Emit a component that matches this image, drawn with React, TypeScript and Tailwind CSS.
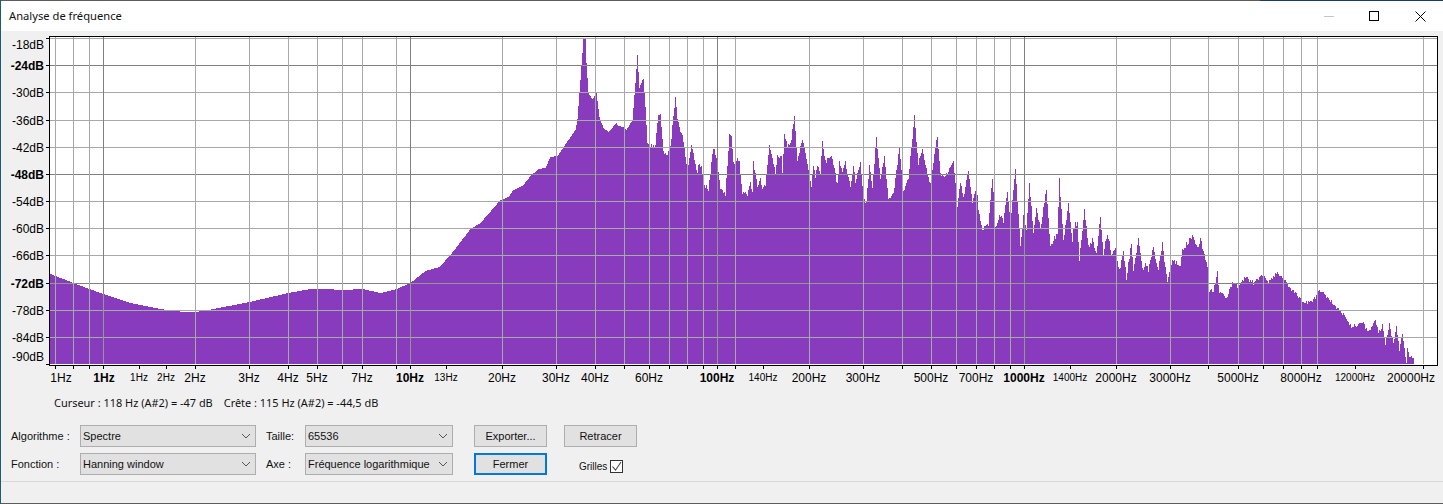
const GRID_X = [55, 73, 89, 195, 249, 288, 317, 342, 362, 396, 502, 556, 595, 624, 649, 669, 687, 703, 735, 809, 863, 902, 931, 956, 976, 994, 1010, 1116, 1170, 1208, 1238, 1263, 1283, 1301, 1317, 1423];
const GRID_X_MAJOR = [103, 410, 717, 1024];
const MINOR_TICKS = [139, 166, 446, 763, 1070, 1355];

const DB_LABELS: [string, number, number, boolean][] = [
  ["-18dB", 38, 45, false],
  ["-24dB", 65, 66, true],
  ["-30dB", 92, 93, false],
  ["-36dB", 120, 121, false],
  ["-42dB", 147, 148, false],
  ["-48dB", 174, 175, true],
  ["-54dB", 201, 202, false],
  ["-60dB", 228, 229, false],
  ["-66dB", 255, 256, false],
  ["-72dB", 283, 284, true],
  ["-78dB", 310, 311, false],
  ["-84dB", 337, 338, false],
  ["-90dB", 364, 357, false],
];

const HZ_LABELS: [string, number, "n" | "b" | "s"][] = [
  ["1Hz", 61, "n"], ["1Hz", 104, "b"], ["1Hz", 139, "s"], ["2Hz", 166, "s"], ["2Hz", 195, "n"],
  ["3Hz", 249, "n"], ["4Hz", 288, "n"], ["5Hz", 317, "n"], ["7Hz", 362, "n"], ["10Hz", 410, "b"],
  ["13Hz", 446, "s"], ["20Hz", 502, "n"], ["30Hz", 556, "n"], ["40Hz", 595, "n"], ["60Hz", 649, "n"],
  ["100Hz", 717, "b"], ["140Hz", 763, "s"], ["200Hz", 809, "n"], ["300Hz", 863, "n"], ["500Hz", 931, "n"],
  ["700Hz", 976, "n"], ["1000Hz", 1024, "b"], ["1400Hz", 1070, "s"], ["2000Hz", 1116, "n"], ["3000Hz", 1170, "n"],
  ["5000Hz", 1238, "n"], ["8000Hz", 1301, "n"], ["12000Hz", 1355, "s"], ["20000Hz", 1411, "n"],
];

// traced outline of the spectrum, x then y
const OUTLINE = [
  50,274, 73,283, 89,289, 103,294, 130,303, 160,309, 183,312, 195,312, 213,309, 249,302, 288,293, 310,289, 325,289, 342,290, 362,289, 380,293, 396,289, 410,283, 425,271, 439,267, 450,255, 470,229, 480,223,
  500,200, 508,197, 513,190, 523,185, 530,176, 538,169, 545,168, 550,157, 557,156, 563,147, 575,130, 577,119, 580,80, 583,39, 585,39, 586,63, 588,93, 592,99, 593,98, 596,93, 599,117, 603,128, 608,132, 616,123, 618,126, 623,127, 626,130, 632,120, 635,83, 637,55, 639,88, 642,80, 643,79, 645,107, 647,143, 650,147, 655,144, 658,113, 660,113, 663,153, 666,155, 670,147, 675,96, 677,120, 683,140, 687,173, 691,145, 695,163, 697,173, 698,165, 701,165, 703,183, 708,189, 713,147, 717,162, 720,187, 725,195, 729,135, 731,136, 733,163, 737,158, 739,163, 742,193, 743,190, 747,196, 750,182, 752,193, 753,162, 757,187, 760,180, 762,187, 765,187, 769,143, 773,163, 775,175, 777,157, 781,158, 782,173, 784,135, 787,147, 790,145, 794,114, 797,163, 802,138, 805,153, 808,170, 811,185, 813,167, 815,177, 817,165, 820,173, 822,143, 825,162, 831,155, 835,175, 837,185, 839,162, 842,173, 845,162, 850,188, 853,165, 855,183, 860,162, 863,198, 866,202, 869,167, 872,187, 876,137, 880,180, 884,158, 888,200, 893,193, 899,149, 903,193, 908,177, 914,117, 918,163, 922,147, 925,167, 930,183, 937,135, 940,173, 945,177, 953,160, 957,208,
  960,182, 963,198, 968,170, 972,205, 976,183, 978,212, 982,228, 988,225, 992,177, 995,228, 1000,215, 1003,222, 1007,192, 1010,222, 1015,170, 1020,245, 1023,217, 1026,230, 1029,183, 1033,232, 1036,208, 1040,228, 1046,190, 1050,247, 1057,232, 1059,179, 1063,242, 1068,202, 1072,242, 1073,227, 1077,222, 1079,260, 1084,209, 1088,247, 1092,240, 1096,253, 1100,217, 1103,253, 1107,233, 1111,253, 1116,245, 1117,263, 1119,270, 1123,253, 1126,278, 1131,243, 1133,273, 1138,237, 1142,270, 1145,263, 1148,270, 1153,248, 1158,270, 1162,244, 1167,282, 1172,258, 1180,268, 1182,250, 1192,236, 1197,248, 1200,239, 1207,267, 1209,292, 1213,290, 1217,273, 1219,293, 1227,297, 1232,282, 1238,287, 1245,277, 1253,283, 1262,275, 1268,282, 1277,272, 1285,282, 1295,293, 1303,302, 1312,303, 1319,290, 1327,298, 1337,308, 1343,315, 1352,327, 1363,322, 1367,333, 1375,320, 1378,333, 1382,325, 1385,343, 1389,325, 1393,343, 1396,325, 1399,350, 1402,333, 1406,363, 1407,350, 1410,358, 1413,357,
];

function spectrumPath() {
  let d = "M50,364";
  let seg = 0;
  for (let x = 50; x <= 1413; x++) {
    while (seg < OUTLINE.length - 4 && OUTLINE[seg + 2] < x) seg += 2;
    const [x0, y0, x1, y1] = [OUTLINE[seg], OUTLINE[seg + 1], OUTLINE[seg + 2], OUTLINE[seg + 3]];
    const t = x1 === x0 ? 0 : (x - x0) / (x1 - x0);
    const r = Math.sin(x * 12.9898) * 43758.5453;
    const amp = x < 650 ? 0 : x < 1209 ? 5 : 4;
    const y = Math.round(y0 + (y1 - y0) * t + (r - Math.floor(r) - 0.5) * amp);
    d += `V${Math.min(y, 364)}H${x + 1}`;
  }
  return d + "V364Z";
}

function GridLines({ light, dark }: { light: string; dark: string }) {
  return (
    <g shapeRendering="crispEdges" strokeWidth={1}>
      {DB_LABELS.slice(0, -1).map(([t, y, , bold]) => (
        <line key={t} x1={50} x2={1437} y1={y + 0.5} y2={y + 0.5} stroke={bold ? dark : light} />
      ))}
      {GRID_X.map((x) => (
        <line key={x} x1={x + 0.5} x2={x + 0.5} y1={37} y2={364} stroke={light} />
      ))}
      {GRID_X_MAJOR.map((x) => (
        <line key={x} x1={x + 0.5} x2={x + 0.5} y1={37} y2={364} stroke={dark} />
      ))}
    </g>
  );
}

function Chart() {
  const path = spectrumPath();
  return (
    <svg viewBox="1 31 1442 357" className="block h-[357px] w-[1442px] shrink-0">
      <clipPath id="spec">
        <path d={path} />
      </clipPath>
      <rect x={50} y={37} width={1387} height={328} fill="#ffffff" />
      <GridLines light="#a8a8a8" dark="#808080" />
      <path d={path} fill="#893bbd" shapeRendering="crispEdges" />
      <g clipPath="url(#spec)">
        <GridLines light="#a3aea3" dark="#8f9a8f" />
      </g>
      <g stroke="#000000" shapeRendering="crispEdges" fill="none">
        <path d="M49.5,36.5H1437.5V365.5H49.5Z" />
        {DB_LABELS.map(([t, y]) => (
          <line key={t} x1={46} x2={49} y1={y + 0.5} y2={y + 0.5} />
        ))}
        {[...GRID_X, ...GRID_X_MAJOR, ...MINOR_TICKS].map((x) => (
          <line key={x} x1={x + 0.5} x2={x + 0.5} y1={365} y2={369} />
        ))}
      </g>
      <g fill="#000000" className="font-['Liberation_Sans',Arial,sans-serif]">
        {DB_LABELS.map(([t, , ly, bold]) => (
          <text key={t} x={44} y={ly + 4} textAnchor="end" fontSize={12} fontWeight={bold ? 700 : 400}>
            {t}
          </text>
        ))}
        {HZ_LABELS.map(([t, x, kind]) => (
          <text
            key={`${t}-${x}`}
            x={x}
            y={kind === "s" ? 381 : 382}
            textAnchor="middle"
            fontSize={kind === "s" ? 10 : 12}
            fontWeight={kind === "b" ? 700 : 400}
          >
            {t}
          </text>
        ))}
      </g>
    </svg>
  );
}

function Chevron() {
  return (
    <svg width="10" height="6" viewBox="0 0 10 6" className="shrink-0">
      <path d="M1 1l4 4 4-4" fill="none" stroke="#555555" strokeWidth="1" />
    </svg>
  );
}

function Select({ value }: { value: string }) {
  return (
    <div className="flex h-[22px] items-center justify-between border border-[#adadad] bg-[#e1e1e1] pl-[2px] pr-[4px]">
      <span className="whitespace-nowrap">{value}</span>
      <Chevron />
    </div>
  );
}

function Button({ label, focused }: { label: string; focused?: boolean }) {
  return (
    <button
      className={
        focused
          ? "flex h-[22px] items-center justify-center border-2 border-[#0078d7] bg-[#e1e1e1]"
          : "flex h-[22px] items-center justify-center border border-[#adadad] bg-[#e1e1e1]"
      }
    >
      {label}
    </button>
  );
}

export default function App() {
  return (
    <div className="flex h-[504px] w-[1443px] flex-col overflow-hidden border-b border-l border-b-[#5c5c5c] border-l-[#1c5a78] bg-[#f0f0f0] font-['Noto_Sans',sans-serif] text-[#111111]">
      <div className="flex h-px shrink-0">
        <div className="w-[1259px] bg-[#5c5c5c]" />
        <div className="flex-1 bg-[#1d3a63]" />
      </div>
      <div className="flex h-[30px] shrink-0 items-center justify-between bg-white pl-[8px] text-[11.2px]">
        <span>Analyse de fréquence</span>
        <div className="flex items-center pr-[17px]">
          <svg width="11" height="11" viewBox="0 0 11 11" shapeRendering="crispEdges">
            <path d="M0 5.5h10" stroke="#c6c6c6" />
          </svg>
          <svg width="11" height="11" viewBox="0 0 11 11" shapeRendering="crispEdges" className="ml-[34px]">
            <rect x=".5" y=".5" width="9" height="9" fill="none" stroke="#000000" />
          </svg>
          <svg width="11" height="11" viewBox="0 0 11 11" className="ml-[35px]">
            <path d="M.5.5l10 10M10.5.5l-10 10" stroke="#000000" strokeWidth="1" />
          </svg>
        </div>
      </div>
      <Chart />
      <div className="flex h-[30px] shrink-0 items-center gap-[11px] pl-[53px] text-[10.95px]">
        <span>Curseur : 118 Hz (A#2) = -47 dB</span>
        <span>Crête : 115 Hz (A#2) = -44,5 dB</span>
      </div>
      <div className="mt-[7px] grid shrink-0 grid-cols-[79px_176px_49px_148px_21px_73px_17px_73px] gap-y-[6px] font-['Liberation_Sans',Arial,sans-serif] text-[11px]">
        <span className="flex items-center pl-[10px]">Algorithme :</span>
        <Select value="Spectre" />
        <span className="flex items-center pl-[10px]">Taille:</span>
        <Select value="65536" />
        <span />
        <Button label="Exporter..." />
        <span />
        <Button label="Retracer" />

        <span className="flex items-center pl-[10px]">Fonction :</span>
        <Select value="Hanning window" />
        <span className="flex items-center pl-[10px]">Axe :</span>
        <Select value="Fréquence logarithmique" />
        <span />
        <Button label="Fermer" focused />
        <span />
        <div className="flex items-center gap-[4px] pl-[15px] pt-[4px]">
          <span className="w-[27px] text-[10px]">Grilles</span>
          <svg width="13" height="13" viewBox="0 0 13 13">
            <rect x=".5" y=".5" width="12" height="12" fill="#ffffff" stroke="#333333" />
            <path d="M2.5 6.5l3 3.7L11 2" fill="none" stroke="#444444" strokeWidth="1.1" />
          </svg>
        </div>
      </div>
      <div className="mt-[6px] h-px shrink-0 bg-[#d9d9d9]" />
    </div>
  );
}
